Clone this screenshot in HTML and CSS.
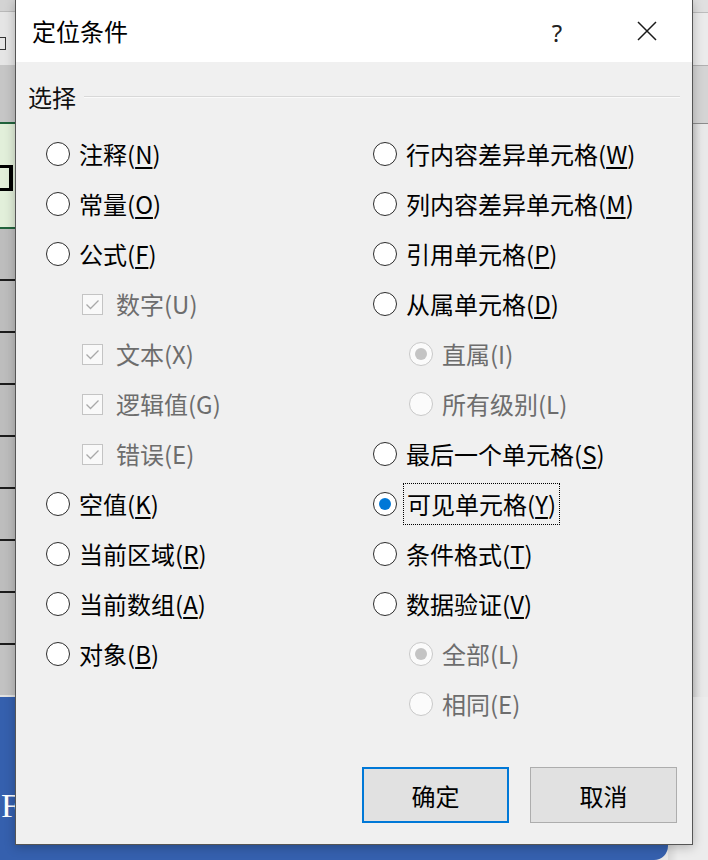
FILE: index.html
```html
<!DOCTYPE html>
<html lang="zh-CN">
<head>
    <meta charset="UTF-8">
    <title>定位条件</title>
    <link rel="stylesheet" href="styles.css">
</head>
<body>
    <!-- spreadsheet behind the dialog -->
    <div class="desk">
        <div class="desk-top">
            <div class="strip strip-left">
                <div class="cell c-head"></div>
                <div class="cell c-light"><span class="mark"></span></div>
                <div class="cell c-grey"></div>
                <div class="cell c-green"><span class="mark mark-bold"></span></div>
                <div class="cell c-row"></div>
                <div class="cell c-row"></div>
                <div class="cell c-row"></div>
                <div class="cell c-row"></div>
                <div class="cell c-row"></div>
                <div class="cell c-row"></div>
                <div class="cell c-row"></div>
                <div class="cell c-row"></div>
                <div class="cell c-last"></div>
            </div>
            <div class="desk-mid"></div>
            <div class="strip strip-right">
                <div class="cell r-head"></div>
                <div class="cell r-light"></div>
                <div class="cell r-grey"></div>
                <div class="cell r-rest"></div>
            </div>
        </div>
        <div class="desk-bottom">
            <div class="blue"><span class="blue-f">F</span></div>
            <div class="desk-rest"></div>
        </div>
    </div>

    <div class="dialog">
        <div class="titlebar">
            <span class="title">定位条件</span>
            <span class="tb-btn help">?</span>
            <span class="tb-btn close">
                <svg width="20" height="20" viewBox="0 0 20 20"><path d="M1 1L19 19M19 1L1 19" stroke="#1a1a1a" stroke-width="1.5" fill="none"/></svg>
            </span>
        </div>

        <div class="group">
            <span class="group-label">选择</span>
            <span class="group-line"></span>
        </div>

        <div class="options">
            <div class="col">
                <div class="opt"><span class="radio"></span><span class="txt">注释(<u>N</u>)</span></div>
                <div class="opt"><span class="radio"></span><span class="txt">常量(<u>O</u>)</span></div>
                <div class="opt"><span class="radio"></span><span class="txt">公式(<u>F</u>)</span></div>
                <div class="opt sub off"><span class="check"><svg width="19" height="19" viewBox="0 0 19 19"><path d="M3.5 9.5L7.5 13.5L15.5 5.5" stroke="#a9a9a9" stroke-width="1.3" fill="none"/></svg></span><span class="txt">数字(U)</span></div>
                <div class="opt sub off"><span class="check"><svg width="19" height="19" viewBox="0 0 19 19"><path d="M3.5 9.5L7.5 13.5L15.5 5.5" stroke="#a9a9a9" stroke-width="1.3" fill="none"/></svg></span><span class="txt">文本(X)</span></div>
                <div class="opt sub off"><span class="check"><svg width="19" height="19" viewBox="0 0 19 19"><path d="M3.5 9.5L7.5 13.5L15.5 5.5" stroke="#a9a9a9" stroke-width="1.3" fill="none"/></svg></span><span class="txt">逻辑值(G)</span></div>
                <div class="opt sub off"><span class="check"><svg width="19" height="19" viewBox="0 0 19 19"><path d="M3.5 9.5L7.5 13.5L15.5 5.5" stroke="#a9a9a9" stroke-width="1.3" fill="none"/></svg></span><span class="txt">错误(E)</span></div>
                <div class="opt"><span class="radio"></span><span class="txt">空值(<u>K</u>)</span></div>
                <div class="opt"><span class="radio"></span><span class="txt">当前区域(<u>R</u>)</span></div>
                <div class="opt"><span class="radio"></span><span class="txt">当前数组(<u>A</u>)</span></div>
                <div class="opt"><span class="radio"></span><span class="txt">对象(<u>B</u>)</span></div>
            </div>
            <div class="col">
                <div class="opt"><span class="radio"></span><span class="txt">行内容差异单元格(<u>W</u>)</span></div>
                <div class="opt"><span class="radio"></span><span class="txt">列内容差异单元格(<u>M</u>)</span></div>
                <div class="opt"><span class="radio"></span><span class="txt">引用单元格(<u>P</u>)</span></div>
                <div class="opt"><span class="radio"></span><span class="txt">从属单元格(<u>D</u>)</span></div>
                <div class="opt sub off"><span class="radio on"></span><span class="txt">直属(I)</span></div>
                <div class="opt sub off"><span class="radio"></span><span class="txt">所有级别(L)</span></div>
                <div class="opt"><span class="radio"></span><span class="txt">最后一个单元格(<u>S</u>)</span></div>
                <div class="opt"><span class="radio on"></span><span class="txt focus">可见单元格(<u>Y</u>)</span></div>
                <div class="opt"><span class="radio"></span><span class="txt">条件格式(<u>T</u>)</span></div>
                <div class="opt"><span class="radio"></span><span class="txt">数据验证(<u>V</u>)</span></div>
                <div class="opt sub off"><span class="radio on"></span><span class="txt">全部(L)</span></div>
                <div class="opt sub off"><span class="radio"></span><span class="txt">相同(E)</span></div>
            </div>
        </div>

        <div class="actions">
            <button class="btn primary">确定</button>
            <button class="btn">取消</button>
        </div>
    </div>
</body>
</html>
```

FILE: styles.css
```css
:root {
    --dialog-bg: #f0f0f0;
    --accent: #0078d7;
    --disabled: #6d6d6d;
    --sheet-line: #1c1c1c;
}

body {
    margin: 0;
    width: 708px;
    height: 860px;
    overflow: hidden;
    position: relative;
    font-family: "Noto Sans CJK SC", "Noto Sans", sans-serif;
    background: #e6e6e6;
}

/* ---- backdrop ---- */

.desk {
    display: flex;
    flex-direction: column;
    height: 860px;
}

.desk-top {
    display: flex;
    height: 697px;
}

.strip {
    width: 15px;
    display: flex;
    flex-direction: column;
    overflow: hidden;
}

.desk-mid {
    flex: 1;
}

.cell {
    box-sizing: border-box;
    display: flex;
    overflow: hidden;
}

.c-head {
    height: 12px;
    background: #d3d3d3;
    border-bottom: 1px solid #b9b9b9;
}

.c-light {
    height: 53px;
    background: #e5e5e5;
    padding-top: 25px;
}

.c-grey {
    height: 57px;
    background: #c6c6c6;
}

.c-green {
    height: 107px;
    background: #e2efda;
    border-top: 2px solid #21633c;
    border-bottom: 2px solid #21633c;
    padding-top: 41px;
}

/* right half of a cell glyph, cut by the dialog */
.mark {
    width: 6px;
    height: 13px;
    box-sizing: border-box;
    border: 1.5px solid #333;
    border-left: none;
}

.mark-bold {
    width: 13px;
    height: 26px;
    border: 3px solid #000;
    border-right-width: 4px;
    border-left: none;
}

.c-row {
    height: 52px;
    background: #bdbdbd;
    border-bottom: 2px solid var(--sheet-line);
}

.c-last {
    flex: 1;
    background: #c2c2c2;
    border-bottom: 2px solid #e2e2e2;
}

.r-head {
    height: 13px;
    background: #e0e0e0;
    border-bottom: 1px solid #bdbdbd;
}

.r-light {
    height: 53px;
    background: #ebebeb;
    border-bottom: 1px solid #b0b0b0;
}

.r-grey {
    height: 58px;
    background: #d4d4d4;
    border-bottom: 1px solid #8c8c8c;
}

.r-rest {
    flex: 1;
    background: linear-gradient(to right, #d6d6d6, #e9e9e9 8px);
}

.desk-bottom {
    flex: 1;
    display: flex;
}

.blue {
    width: 668px;
    background: #3560ae;
    border-bottom-right-radius: 14px;
}

.blue-f {
    display: block;
    padding: 92px 0 0 1px;
    font-family: "Liberation Serif", serif;
    font-size: 34px;
    line-height: 34px;
    color: #fff;
}

.desk-rest {
    flex: 1;
    background: linear-gradient(to right, #d8d8d8, #ececec 10px);
}

/* ---- dialog window ---- */

.dialog {
    position: absolute;
    left: 15px;
    top: 0;
    width: 678px;
    height: 845px;
    box-sizing: border-box;
    border: 1px solid #555;
    border-top: none;
    background: var(--dialog-bg);
    box-shadow: 0 2px 10px rgba(0, 0, 0, 0.25);
    display: flex;
    flex-direction: column;
    font-size: 24px;
    color: #000;
}

.titlebar {
    height: 62px;
    background: #fff;
    display: flex;
    align-items: center;
}

.title {
    flex: 1;
    padding-left: 16px;
    line-height: 30px;
}

.tb-btn {
    width: 90px;
    height: 62px;
    display: flex;
    align-items: center;
    justify-content: center;
}

.help {
    font-family: "Noto Sans", sans-serif;
    font-size: 24px;
    color: #222;
    padding-top: 2px;
    box-sizing: border-box;
}

.group {
    display: flex;
    align-items: center;
    margin: 20px 12px 0;
    height: 30px;
}

.group-label {
    line-height: 30px;
    color: #111;
}

.group-line {
    flex: 1;
    height: 1px;
    margin-left: 8px;
    background: #d8d8d8;
    border-bottom: 1px solid #fafafa;
}

.options {
    display: grid;
    grid-template-columns: 327px 1fr;
    margin-top: 17px;
    padding-left: 30px;
}

.col {
    display: flex;
    flex-direction: column;
}

.opt {
    height: 50px;
    display: flex;
    align-items: center;
    gap: 9px;
}

.opt.sub {
    padding-left: 36px;
}

.txt {
    line-height: 34px;
    white-space: nowrap;
}

.txt u {
    text-decoration-thickness: 1.5px;
    text-underline-offset: 3px;
}

.txt.focus {
    margin-left: -3px;
    padding: 3px 3px;
    border: 1px dotted #000;
}

.radio {
    flex: none;
    width: 24px;
    height: 24px;
    box-sizing: border-box;
    border: 1.5px solid #2b2b2b;
    border-radius: 50%;
    background: #fff;
    display: flex;
    align-items: center;
    justify-content: center;
}

.radio.on::after {
    content: "";
    width: 12px;
    height: 12px;
    border-radius: 50%;
    background: var(--accent);
}

.check {
    flex: none;
    width: 21px;
    height: 21px;
    box-sizing: border-box;
    border: 1px solid #c4c4c4;
    background: #f9f9f9;
    margin-right: 4px;
    display: flex;
    align-items: center;
    justify-content: center;
}

.opt.off {
    color: var(--disabled);
}

.opt.off .radio {
    border-color: #c8c8c8;
    background: #fbfbfb;
}

.opt.off .radio.on::after {
    background: #c4c4c4;
}

.actions {
    margin-top: auto;
    display: flex;
    justify-content: flex-end;
    gap: 21px;
    padding: 0 15px 21px 0;
}

.btn {
    width: 147px;
    height: 56px;
    box-sizing: border-box;
    background: #e1e1e1;
    border: 1px solid #adadad;
    font-family: inherit;
    font-size: 24px;
    color: #000;
    padding: 0;
}

.btn.primary {
    border: 2px solid var(--accent);
}
```
